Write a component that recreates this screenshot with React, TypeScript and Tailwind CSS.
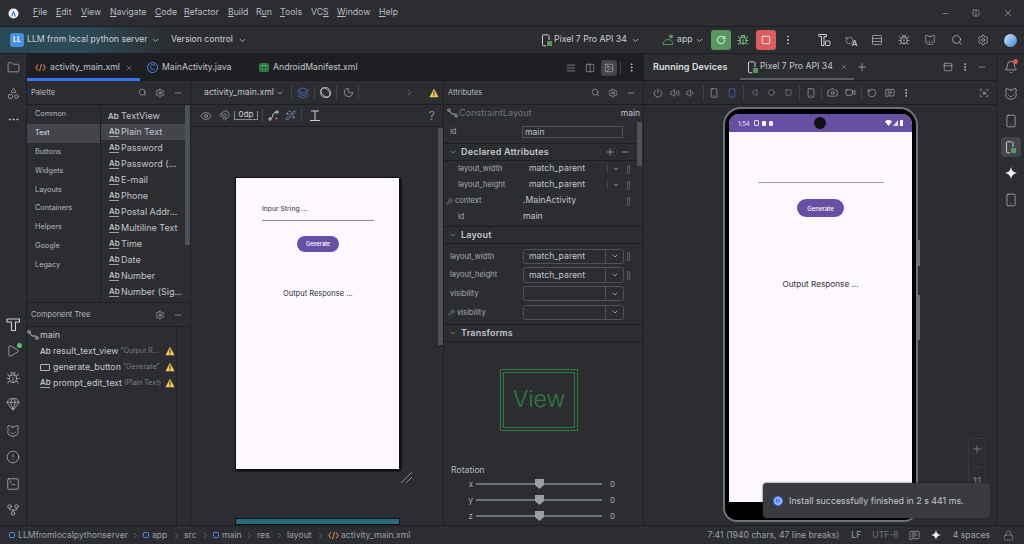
import React from 'react';
import {
  Bell, Bug, Camera, ChevronDown, ChevronRight, Circle, CircleAlert, EllipsisVertical, Eye, Folder, Gem, GitFork,
  Layers, Lock, Magnet, MessageSquareText, Minus, Moon, MoreHorizontal, PanelTop, Play, Plus, Power, RotateCcw, Search, Settings,
  Shapes, Square, SquareTerminal, Triangle, Video, Volume1, Volume2, Wand2, Wrench, X,
  AlignJustify, Columns2, Image, Smartphone, Rows3, Cat, ScanSearch, Info,
} from 'lucide-react';

const ic = '#ced0d6';

const Ab: React.FC<{ line?: boolean }> = ({ line = true }) => (
  <span className={`inline-block w-[10px] text-[8px] leading-[9px] font-medium text-[#ced0d6] ${line ? 'border-b border-[#9da0a8]' : ''}`}>Ab</span>
);

const Warn: React.FC = () => (
  <svg width="10" height="10" viewBox="0 0 10 10" className="shrink-0">
    <path d="M5 .8 9.600 9.200H.4z" fill="#f2c55c" />
    <rect x="4.500" y="3.400" width="1" height="3.200" fill="#2b2d30" />
    <rect x="4.500" y="7.200" width="1" height="1" fill="#2b2d30" />
  </svg>
);

const Sparkle: React.FC<{ size?: number }> = ({ size = 12 }) => (
  <svg width={size} height={size} viewBox="0 0 12 12"><path d="M6 0C6.500 3.500 8.500 5.500 12 6 8.500 6.500 6.500 8.500 6 12 5.500 8.500 3.500 6.500 0 6 3.500 5.500 5.500 3.500 6 0z" fill="#eef0f4" /></svg>
);

const DeviceIcon: React.FC = () => (
  <svg width="12" height="13" viewBox="0 0 12 13" fill="none" className="shrink-0">
    <path d="M7 .8H2.500a1 1 0 0 0-1 1v9a1 1 0 0 0 1 1H5" stroke="#ced0d6" strokeWidth="1" />
    <rect x="6" y="7" width="5" height="5" fill="#57965c" />
    <rect x="7.500" y="1" width="1" height="5" fill="#ced0d6" />
  </svg>
);

const Hammer: React.FC = () => (
  <svg width="15" height="15" viewBox="0 0 15 15" fill="none" stroke={ic} strokeWidth="1.100">
    <path d="M1.500 2h12v3h-4v8.500h-4V5h-4c-1 0-1-3 0-3z" />
  </svg>
);

const BuildIcon: React.FC = () => (
  <svg width="14" height="14" viewBox="0 0 14 14" fill="none" stroke={ic} strokeWidth="1" className="shrink-0">
    <path d="M1.500 1.500h8v2h-2.500v9h-2.500v-9H2.500c-1.200 0-1.200-2 0-2z" />
    <rect x="8.500" y="8" width="4.500" height="4.500" rx=".8" />
  </svg>
);

const XmlIcon: React.FC = () => (
  <svg width="11" height="9" viewBox="0 0 11 9" fill="none" stroke="#c77d55" strokeWidth="1.100" className="shrink-0">
    <path d="M3 1.500 .8 4.500 3 7.500M8 1.500l2.200 3L8 7.500M6.500.8 4.500 8.200" />
  </svg>
);

const Mod: React.FC = () => <span className="w-[6px] h-[6px] rounded-[1.500px] border border-[#548af7] shrink-0" />;

const Sep: React.FC<{ className: string }> = ({ className }) => (
  <ChevronRight size={9} strokeWidth={1.500} className={`text-[#868a91] shrink-0 ${className}`} />
);

const menu: [string, string, string, string][] = [
  ['', 'F', 'ile', 'w-[23px]'],
  ['', 'E', 'dit', 'w-[25px]'],
  ['', 'V', 'iew', 'w-[29px]'],
  ['', 'N', 'avigate', 'w-[45px]'],
  ['', 'C', 'ode', 'w-[29px]'],
  ['', 'R', 'efactor', 'w-[44px]'],
  ['', 'B', 'uild', 'w-[28px]'],
  ['R', 'u', 'n', 'w-[24px]'],
  ['', 'T', 'ools', 'w-[31px]'],
  ['VC', 'S', '', 'w-[26px]'],
  ['', 'W', 'indow', 'w-[42px]'],
  ['', 'H', 'elp', 'w-[30px]'],
];

const TitleBar: React.FC = () => (
  <div className="h-[27px] flex items-center bg-[#2b2d30] border-b border-[#1e1f22] shrink-0">
    <div className="w-[33px] pl-[8px] flex">
      <svg width="11" height="11" viewBox="0 0 11 11"><circle cx="5.500" cy="5.500" r="5" fill="#f2f4f8" /><path d="M5.500 2.200 3 8.500h1.300l1.200-3.400 1.200 3.400H8z" fill="#3574f0" /></svg>
    </div>
    {menu.map(([a, u, b, w]) => (
      <span key={u + b} className={`${w} text-[8.700px] text-[#bcbec4] whitespace-nowrap`}>
        {a}<span className="underline underline-offset-1">{u}</span>{b}
      </span>
    ))}
    <div className="ml-auto flex items-center text-[#ced0d6]">
      <Minus size={9} strokeWidth={1.200} className="mr-[22px]" />
      <Columns2 size={8} strokeWidth={1.300} className="mr-[23px]" />
      <X size={10} strokeWidth={1.200} className="mr-[11px]" />
    </div>
  </div>
);

const Toolbar: React.FC = () => (
  <div className="h-[27px] flex items-center bg-[#2b2d30] border-b border-[#1e1f22] shrink-0 text-[#ced0d6] text-[8.700px] text-[#c3c6cc]">
    <div className="w-[171px] h-full flex items-center pl-[10px] bg-gradient-to-r from-[#2a4a57] via-[#2a4a57] to-[#2b2d30] shrink-0">
      <span className="w-[14px] h-[14px] rounded-[3px] bg-[#4a8fe0] text-[7px] font-bold text-white flex items-center justify-center shrink-0">LL</span>
      <span className="ml-[3px] whitespace-nowrap">LLM from local python server</span>
      <ChevronDown size={9} className="ml-[3px] shrink-0" />
    </div>
    <span className="w-[64px] whitespace-nowrap">Version control</span>
    <ChevronDown size={9} className="ml-[3px]" />
    <div className="ml-[294px]"><DeviceIcon /></div>
    <span className="ml-[1px] w-[73px] whitespace-nowrap">Pixel 7 Pro API 34</span>
    <ChevronDown size={9} className="ml-[4px]" />
    <svg width="12" height="12" viewBox="0 0 12 12" fill="none" className="ml-[22px]"><path d="M1 10.500c0-3 2-5 5-5s5 2 5 5z" stroke="#57965c" /><circle cx="9" cy="2.500" r="2" fill="#57965c" /></svg>
    <span className="ml-[3px] w-[15px]">app</span>
    <ChevronDown size={9} className="ml-[3px]" />
    <span className="ml-[7px] w-[20px] h-[20px] rounded-[3px] bg-[#57965c] flex items-center justify-center"><RotateCcw size={10} className="scale-x-[-1] text-white" /></span>
    <Bug size={12} className="ml-[6px] text-[#7ac27f]" />
    <span className="ml-[7px] w-[20px] h-[20px] rounded-[3px] bg-[#db5c5c] flex items-center justify-center"><Square size={10} className="text-white" /></span>
    <EllipsisVertical size={12} className="ml-[6px]" />
    <div className="ml-[23px] flex items-center gap-[14.500px]">
      <BuildIcon />
      <span className="flex items-end w-[12px] -ml-[1px] relative">
        <RotateCcw size={9} strokeWidth={1.300} />
        <span className="absolute right-[-1px] bottom-[-2px] text-[8px] leading-none font-medium">A</span>
      </span>
      <Rows3 size={12} strokeWidth={1.200} />
      <Bug size={12} strokeWidth={1.200} />
      <Cat size={12} strokeWidth={1.200} />
      <Search size={12} strokeWidth={1.300} />
      <Settings size={12} strokeWidth={1.200} />
      <span className="w-[13px] h-[13px] rounded-full bg-gradient-to-br from-[#d6e4f0] to-[#2f86d6]" />
    </div>
  </div>
);

const LeftStripe: React.FC = () => (
  <div className="w-[27px] shrink-0 flex flex-col items-center border-r border-[#1e1f22] text-[#ced0d6] pt-[7px] h-full">
    <Folder size={13} strokeWidth={1.100} />
    <Shapes size={13} strokeWidth={1.100} className="mt-[13px]" />
    <MoreHorizontal size={13} strokeWidth={1.500} className="mt-[13px]" />
    <div className="mt-auto flex flex-col items-center gap-[12.500px] pb-[8px]">
      <Hammer />
      <span className="relative flex">
        <Play size={14} strokeWidth={1.100} />
        <span className="absolute -top-px -right-[2px] w-[5px] h-[5px] rounded-full bg-[#57c26a]" />
      </span>
      <Bug size={14} strokeWidth={1.100} />
      <Gem size={14} strokeWidth={1.100} />
      <Cat size={14} strokeWidth={1.100} />
      <CircleAlert size={14} strokeWidth={1.100} />
      <SquareTerminal size={14} strokeWidth={1.100} />
      <GitFork size={14} strokeWidth={1.100} />
    </div>
  </div>
);

const RightStripe: React.FC = () => (
  <div className="w-[28px] shrink-0 flex flex-col items-center border-l border-[#1e1f22] text-[#ced0d6] pt-[6px] h-full">
    <span className="relative flex">
      <Bell size={14} strokeWidth={1.100} />
      <span className="absolute -top-[1px] right-0 w-[5px] h-[5px] rounded-full bg-[#e0564f]" />
    </span>
    <Cat size={14} strokeWidth={1.100} className="mt-[13px]" />
    <Smartphone size={14} strokeWidth={1.100} className="mt-[13px]" />
    <span className="mt-[9px] w-[20px] h-[20px] rounded-[4px] bg-[#43454a] flex items-center justify-center"><DeviceIcon /></span>
    <div className="mt-[10px] flex"><Sparkle /></div>
    <Smartphone size={14} strokeWidth={1.100} className="mt-[14px]" />
  </div>
);

const TabBar: React.FC = () => (
  <div className="h-[27px] flex items-stretch bg-[#1e1f22] shrink-0 text-[#c3c6cc] text-[8.700px]">
    <div className="w-[113px] flex items-center pl-[8px] border-b-[3px] border-[#3574f0] pt-[3px]">
      <XmlIcon />
      <span className="ml-[4px] w-[69px] whitespace-nowrap">activity_main.xml</span>
      <X size={8} className="ml-[6px] text-[#868a91]" />
    </div>
    <div className="w-[118px] flex items-center pl-[7px]">
      <span className="w-[11px] h-[11px] rounded-full border border-[#548af7] text-[7px] leading-[9px] text-center text-[#548af7]">C</span>
      <span className="ml-[4px]">MainActivity.java</span>
    </div>
    <div className="flex items-center pl-[1px]">
      <span className="w-[10px] h-[9px] rounded-[1.500px] bg-[#2f7a43] flex justify-center gap-[2px] pt-[2px]">
        <span className="w-[1px] h-[1px] bg-[#cfe8d5]" />
        <span className="w-[1px] h-[1px] bg-[#cfe8d5]" />
      </span>
      <span className="ml-[4px]">AndroidManifest.xml</span>
    </div>
    <div className="ml-auto flex items-center text-[#ced0d6]">
      <AlignJustify size={10} strokeWidth={1.200} className="mr-[9px]" />
      <Columns2 size={10} strokeWidth={1.200} className="mr-[6px]" />
      <span className="w-[16px] h-[16px] rounded-[3px] bg-[#43454a] flex items-center justify-center mr-[3px]"><Image size={10} strokeWidth={1.200} /></span>
      <span className="w-px h-[14px] bg-[#43454a] mr-[5px]" />
      <EllipsisVertical size={11} className="mr-[7px]" />
    </div>
  </div>
);

const cats = ['Common', 'Text', 'Buttons', 'Widgets', 'Layouts', 'Containers', 'Helpers', 'Google', 'Legacy'];
const items = ['Plain Text', 'Password', 'Password (...', 'E-mail', 'Phone', 'Postal Addr...', 'Multiline Text', 'Time', 'Date', 'Number', 'Number (Sig...'];

const PanelHead: React.FC<{ title: string; search?: boolean }> = ({ title, search = true }) => (
  <div className="h-[24px] flex items-center border-b border-[#1e1f22] pl-[4px] pr-[7px] text-[#ced0d6] shrink-0">
    <span className="text-[7.500px] text-[#b4b8bf]">{title}</span>
    <div className="ml-auto flex items-center gap-[8px]">
      {search && <Search size={9} strokeWidth={1.300} />}
      <Settings size={10} strokeWidth={1.200} />
      <Minus size={10} strokeWidth={1.200} />
    </div>
  </div>
);

const Palette: React.FC = () => (
  <div className="w-[164px] shrink-0 h-full flex flex-col border-r border-[#1e1f22]">
    <PanelHead title="Palette" />
    <div className="h-[198px] flex border-b border-[#1e1f22] shrink-0">
      <div className="w-[74px] border-r border-[#1e1f22] pt-[0.500px] text-[7.300px] text-[#b4b8bf]">
        {cats.map((c) => (
          <div key={c} className={`h-[18.800px] flex items-center pl-[8px] ${c === 'Text' ? 'bg-[#43454a] text-[#dfe1e5]' : ''}`}>{c}</div>
        ))}
      </div>
      <div className="flex-1 relative text-[9px] text-[#c3c6cc] pt-[3px]">
        <div className="h-[16px] flex items-center pl-[7px] gap-[2px]"><Ab line={false} /><span className="ml-[1px]">TextView</span></div>
        {items.map((i) => (
          <div key={i} className={`h-[16px] flex items-center pl-[8px] gap-[2px] whitespace-nowrap ${i === 'Plain Text' ? 'bg-[#43454a]' : ''}`}><Ab /><span>{i}</span></div>
        ))}
        <span className="absolute right-0 top-0 w-[5px] h-[140px] bg-[#4e5157]" />
      </div>
    </div>
    <PanelHead title="Component Tree" search={false} />
    <div className="flex-1 flex">
      <div className="w-[150px] border-r border-[#1e1f22] text-[8.800px] text-[#c3c6cc]">
        <div className="h-[16px] flex items-center gap-[1px]">
          <svg width="12" height="10" viewBox="0 0 12 10" fill="none" stroke="#b4b8bf"><circle cx="2" cy="2" r="1.300" /><circle cx="10" cy="8" r="1.300" /><path d="M3 3l2 3h4" /></svg>
          <span>main</span>
        </div>
        <div className="h-[16px] flex items-center pl-[13px] whitespace-nowrap"><Ab line={false} /><span className="ml-[3px]">result_text_view</span><span className="ml-[2px] text-[7px] text-[#7a7e85]">"Output R...</span><span className="ml-auto mr-[1px]"><Warn /></span></div>
        <div className="h-[16px] flex items-center pl-[13px] whitespace-nowrap"><span className="w-[10px] h-[7px] border border-[#b4b8bf] rounded-[1px]" /><span className="ml-[3px]">generate_button</span><span className="ml-[2px] text-[7px] text-[#7a7e85]">"Generate"</span><span className="ml-auto mr-[1px]"><Warn /></span></div>
        <div className="h-[16px] flex items-center pl-[13px] whitespace-nowrap"><Ab /><span className="ml-[3px]">prompt_edit_text</span><span className="ml-[2px] text-[7px] text-[#7a7e85]">(Plain Text)</span><span className="ml-auto mr-[1px]"><Warn /></span></div>
      </div>
    </div>
  </div>
);

const Designer: React.FC = () => (
  <div className="w-[253px] shrink-0 h-full flex flex-col border-r border-[#1e1f22] text-[#ced0d6] overflow-hidden">
    <div className="h-[24px] flex items-center border-b border-[#1e1f22] pl-[13px] shrink-0">
      <span className="text-[8.700px] w-[69px] whitespace-nowrap text-[#c3c6cc]">activity_main.xml</span>
      <ChevronDown size={8} className="ml-[3px]" />
      <span className="w-px h-[13px] bg-[#43454a] ml-[7px]" />
      <Layers size={12} strokeWidth={1.300} className="ml-[5px] text-[#548af7]" />
      <span className="w-px h-[13px] bg-[#43454a] ml-[5px]" />
      <svg width="13" height="13" viewBox="0 0 13 13" fill="none" stroke="#ced0d6" strokeWidth="0.800" className="ml-[4px]"><ellipse cx="6.500" cy="6.500" rx="5.500" ry="3.500" transform="rotate(45 6.500 6.500)" /><circle cx="6.500" cy="6.500" r="5" /></svg>
      <span className="w-px h-[13px] bg-[#43454a] ml-[4px]" />
      <Moon size={11} strokeWidth={1.200} className="ml-[6px]" />
      <span className="w-px h-[13px] bg-[#43454a] ml-[4px]" />
      <ChevronRight size={9} className="ml-[46px] text-[#868a91]" />
      <span className="ml-[15px]"><Warn /></span>
    </div>
    <div className="h-[22px] flex items-center border-b border-[#1e1f22] pl-[9px] shrink-0">
      <Eye size={12} strokeWidth={1.100} />
      <Magnet size={11} strokeWidth={1.200} className="ml-[7px]" />
      <span className="ml-[4px] w-[24px] h-[9px] border-b border-x border-[#868a91] text-[8px] leading-[7px] text-center">0dp</span>
      <span className="w-px h-[13px] bg-[#43454a] ml-[4px]" />
      <svg width="11" height="11" viewBox="0 0 11 11" fill="none" stroke="#ced0d6" className="ml-[5px]"><circle cx="2" cy="9" r="1.200" /><circle cx="9" cy="2" r="1.200" /><path d="M2.800 8C6 8 3 3 8 2.500" /><rect x="7.500" y="7.500" width="2" height="2" fill="#db5c5c" stroke="none" /></svg>
      <Wand2 size={11} strokeWidth={1.200} className="ml-[6px] text-[#a8c0ef]" />
      <span className="w-px h-[13px] bg-[#43454a] ml-[5px]" />
      <svg width="12" height="12" viewBox="0 0 12 12" fill="none" stroke="#ced0d6" className="ml-[7px]"><path d="M2 1h8M6 1v9M1 10.500h10" /></svg>
      <span className="ml-auto mr-[8px] text-[12px] leading-none text-[#868a91]">?</span>
    </div>
    <div className="flex-1 flex flex-col pl-[44px] pt-[50px] relative">
      <div className="w-[165px] h-[293px] shrink-0 bg-[#fdf7ff] border-[1.500px] border-[#111] shadow-[1px_1px_2px_#000] text-[#333] flex flex-col">
        <span className="ml-[26px] mt-[24px] text-[6.800px] leading-[14px]">Inpur String ...</span>
        <span className="ml-[26px] mt-[4px] w-[112px] border-b border-[#8a8a8a]" />
        <span className="ml-[61px] mt-[15px] w-[42px] h-[16px] rounded-full bg-[#6750a4] text-white text-[5.500px] font-medium flex items-center justify-center">Generate</span>
        <span className="mt-[36px] pl-[47px] text-[7.500px] leading-[12px] whitespace-nowrap">Output Response ...</span>
      </div>
      <svg width="14" height="14" viewBox="0 0 14 14" stroke="#868a91" className="ml-[165px]"><path d="M1 13 12 2M6 13l6-6" /></svg>
      <div className="mt-auto w-[165px] h-[7px] bg-[#2a6a80] border border-[#111]" />
      <span className="absolute right-0 top-[1px] h-[217px] w-[5px] bg-[#4e5157]" />
    </div>
  </div>
);

const AttrRow: React.FC<{ label: string; value: string; drop?: boolean; wrench?: boolean }> = ({ label, value, drop, wrench }) => (
  <div className="h-[16px] flex items-center text-[7.500px] relative">
    <span className={`${wrench ? 'pl-[2px]' : 'pl-[14px]'} w-[79px] text-[#a8abb2] flex items-center gap-[2px]`}>
      {wrench && <Wrench size={7} strokeWidth={1.500} />}{label}
    </span>
    <span className={`whitespace-nowrap text-[#c3c6cc] text-[8.700px] ${drop ? 'pl-[6px]' : ''}`}>{value}</span>
    {drop && <span className="absolute left-[163px] flex items-center"><span className="w-px h-[8px] bg-[#43454a] mr-[4px]" /><ChevronDown size={8} className="text-[#ced0d6]" /></span>}
    {(drop || value === '.MainActivity') && <span className="absolute left-[183px] w-[3px] h-[9px] border border-[#5a5d63] rounded-[1px]" />}
  </div>
);

const Combo: React.FC<{ label: string; value?: string; wrench?: boolean; pin?: boolean }> = ({ label, value, wrench, pin }) => (
  <div className="h-[18.700px] flex items-center text-[7.500px] text-[#a8abb2] relative">
    <span className={`w-[79px] flex items-center gap-[2px] ${wrench ? 'pl-[4px]' : 'pl-[6px]'}`}>
      {wrench && <Wrench size={7} strokeWidth={1.500} />}{label}
    </span>
    <div className="w-[101px] h-[15.500px] rounded-[2.500px] border border-[#4e5157] flex items-center">
      <span className="flex-1 pl-[5px] text-[8.700px] whitespace-nowrap text-[#c3c6cc]">{value}</span>
      <span className="w-[18px] h-full border-l border-[#4e5157] flex items-center justify-center"><ChevronDown size={8} className="text-[#ced0d6]" /></span>
    </div>
    {pin && <span className="absolute left-[183px] w-[3px] h-[9px] border border-[#5a5d63] rounded-[1px]" />}
  </div>
);

const Section: React.FC<{ title: string; children?: React.ReactNode }> = ({ title, children }) => (
  <div className="h-[18px] flex items-center border-y border-[#1e1f22] pl-[5px] text-[9px] font-semibold text-[#c3c6cc] tracking-[0.200px]">
    <ChevronDown size={8} className="mr-[4px] text-[#9da0a8]" />{title}{children}
  </div>
);

const Slider: React.FC<{ axis: string }> = ({ axis }) => (
  <div className="h-[16px] flex items-center text-[8px] text-[#a8abb2]">
    <span className="w-[32px] text-right pr-[3px]">{axis}</span>
    <div className="w-[126px] h-[2px] bg-[#6f737a] relative">
      <svg width="9" height="10" viewBox="0 0 9 10" className="absolute left-[59px] -top-[4px]"><path d="M0 0h9v6L4.500 10 0 6z" fill="#9da0a8" /></svg>
    </div>
    <span className="ml-[8px]">0</span>
  </div>
);

const Attributes: React.FC = () => (
  <div className="w-[200px] shrink-0 h-full flex flex-col border-r border-[#1e1f22] relative overflow-hidden">
    <PanelHead title="Attributes" />
    <div className="h-[16px] flex items-center pl-[3px] pr-[3px] text-[8.500px]">
      <svg width="11" height="10" viewBox="0 0 12 10" fill="none" stroke="#b4b8bf"><circle cx="2" cy="2" r="1.300" /><circle cx="10" cy="8" r="1.300" /><path d="M3 3l2 3h4" /></svg>
      <span className="ml-[1px] text-[#6f737a] text-[9px]">ConstraintLayout</span>
      <span className="ml-auto text-[#c3c6cc]">main</span>
    </div>
    <div className="h-[22px] flex items-center text-[7.500px] text-[#a8abb2]">
      <span className="w-[78px] pl-[6px]">id</span>
      <span className="w-[101px] h-[12px] border border-[#4e5157] bg-[#2b2d30] pl-[2px] text-[8.600px] leading-[10px] text-[#c3c6cc]">main</span>
    </div>
    <Section title="Declared Attributes">
      <Plus size={10} strokeWidth={1.300} className="ml-auto text-[#ced0d6]" />
      <Minus size={10} strokeWidth={1.300} className="ml-[5px] mr-[13px] text-[#ced0d6]" />
    </Section>
    <AttrRow label="layout_width" value="match_parent" drop />
    <AttrRow label="layout_height" value="match_parent" drop />
    <AttrRow label="context" value=".MainActivity" wrench />
    <AttrRow label="id" value="main" />
    <div className="h-[1px]" />
    <Section title="Layout" />
    <div className="h-[3px]" />
    <Combo label="layout_width" value="match_parent" pin />
    <Combo label="layout_height" value="match_parent" pin />
    <Combo label="visibility" />
    <Combo label="visibility" wrench />
    <div className="h-[2px]" />
    <Section title="Transforms" />
    <div className="mt-[27px] ml-[56px] w-[78px] h-[62px] shrink-0 border-[1.500px] border-[#2f7a43] p-[2px]">
      <div className="w-full h-full border border-[#2f7a43] flex items-center justify-center text-[23px] font-light text-[#2f7a43] leading-none">View</div>
    </div>
    <div className="mt-[32px] pl-[7px] text-[8.700px] text-[#b4b8bf] leading-[14px]">Rotation</div>
    <div className="-mt-[1px]">
      <Slider axis="x" />
      <Slider axis="y" />
      <Slider axis="z" />
    </div>
    <span className="absolute right-[1px] top-[41px] w-[5px] h-[44px] bg-[#4e5157]" />
  </div>
);

const Phone: React.FC = () => (
  <div className="w-[195px] h-[415px] rounded-t-[18px] rounded-b-[14px] border-[2px] border-[#6f737a] bg-black shrink-0 pt-[5px] px-[4px] overflow-hidden">
    <div className="h-[388px] rounded-t-[10px] overflow-hidden bg-[#fdf7ff] flex flex-col items-center text-[#333]">
      <div className="w-full h-[18px] bg-[#6750a4] flex items-center px-[9px] text-white shrink-0 relative">
        <span className="text-[6px] text-[#e9e0f5]">1:54</span>
        <span className="ml-[4px] w-[5px] h-[6px] border border-white/80 rounded-[1px]" />
        <span className="ml-[3px] w-[4px] h-[5px] bg-white rounded-[1px]" />
        <span className="ml-[3px] w-[4px] h-[5px] bg-white/90 rounded-[1px]" />
        <span className="absolute left-[85px] top-[3px] w-[12px] h-[12px] rounded-full bg-[#111]" />
        <span className="ml-auto flex items-center gap-[1px]">
          <svg width="7" height="6" viewBox="0 0 7 6"><path d="M0 1.500C2-.5 5-.5 7 1.500L3.500 6z" fill="#fff" /></svg>
          <svg width="5" height="6" viewBox="0 0 5 6"><path d="M5 0v6H0z" fill="#fff" opacity=".8" /></svg>
          <span className="ml-[1px] w-[3px] h-[6px] bg-white rounded-[.5px]" />
        </span>
      </div>
      <span className="mt-[50px] w-[126px] border-b border-[#9e9e9e]" />
      <span className="mt-[16px] w-[47px] h-[18px] rounded-full bg-[#6750a4] text-white text-[6px] font-medium flex items-center justify-center">Generate</span>
      <span className="mt-[61px] text-[8.200px] leading-[12px] whitespace-nowrap">Output Response ...</span>
    </div>
  </div>
);

const Running: React.FC = () => (
  <div className="flex-1 h-full flex flex-col relative text-[#ced0d6] overflow-hidden">
    <div className="h-[27px] flex items-stretch border-b border-[#1e1f22] shrink-0">
      <span className="pl-[9px] flex items-center text-[9px] font-semibold text-[#dfe1e5] tracking-[0.100px] w-[96px]">Running Devices</span>
      <div className="w-[114px] flex items-center pl-[7px] border-b-[2px] border-[#5a5d63] pt-[2px]">
        <DeviceIcon />
        <span className="ml-[1px] w-[73px] text-[8.700px] whitespace-nowrap text-[#c3c6cc]">Pixel 7 Pro API 34</span>
        <X size={8} className="ml-[7px] text-[#868a91] shrink-0" />
      </div>
      <span className="flex items-center ml-[2px]"><Plus size={12} strokeWidth={1.200} /></span>
      <span className="ml-auto flex items-center gap-[7px] pr-[9px]">
        <PanelTop size={10} strokeWidth={1.300} />
        <EllipsisVertical size={10} />
        <Minus size={10} strokeWidth={1.200} />
      </span>
    </div>
    <div className="h-[24px] flex items-center border-b border-[#1e1f22] pl-[9px] shrink-0">
      <Power size={10} strokeWidth={1.200} />
      <Volume2 size={10} strokeWidth={1.200} className="ml-[7px]" />
      <Volume1 size={10} strokeWidth={1.200} className="ml-[6px]" />
      <span className="w-px h-[13px] bg-[#43454a] ml-[7px]" />
      <Smartphone size={10} strokeWidth={1.200} className="ml-[5px]" />
      <Smartphone size={10} strokeWidth={1.200} className="ml-[8px] text-[#548af7]" />
      <span className="w-px h-[13px] bg-[#43454a] ml-[6px]" />
      <Triangle size={7} strokeWidth={1.300} className="ml-[6.500px] -rotate-90" />
      <Circle size={7} strokeWidth={1.300} className="ml-[10px]" />
      <Square size={7} strokeWidth={1.300} className="ml-[10px]" />
      <span className="w-px h-[13px] bg-[#43454a] ml-[7.500px]" />
      <Smartphone size={10} strokeWidth={1.200} className="ml-[6px]" />
      <span className="w-px h-[13px] bg-[#43454a] ml-[5px]" />
      <Camera size={11} strokeWidth={1.200} className="ml-[5px]" />
      <Video size={11} strokeWidth={1.200} className="ml-[6.500px]" />
      <span className="w-px h-[13px] bg-[#43454a] ml-[5.500px]" />
      <RotateCcw size={10} strokeWidth={1.200} className="ml-[5px]" />
      <MessageSquareText size={10} strokeWidth={1.200} className="ml-[7.500px]" />
      <EllipsisVertical size={10} className="ml-[6.500px]" />
      <ScanSearch size={10} strokeWidth={1.200} className="ml-auto mr-[7px]" />
    </div>
    <div className="flex-1 pl-[79px] pt-[2px]">
      <Phone />
    </div>
    <span className="absolute left-[274px] top-[186px] w-[2px] h-[26px] bg-[#6f737a]" />
    <span className="absolute left-[274px] top-[241px] w-[2px] h-[45px] bg-[#6f737a]" />
    <div className="absolute left-[324px] top-[384px] w-[18px] h-[60px] border border-[#393b40] rounded-[3px] flex flex-col items-center pt-[4px] text-[#9da0a8]">
      <Plus size={12} strokeWidth={1.200} />
      <Minus size={12} strokeWidth={1.200} className="mt-[6px] text-[#4e5157]" />
      <span className="text-[7px] mt-[3px]">1:1</span>
    </div>
    <div className="absolute left-[119px] top-[429px] w-[227px] h-[35px] rounded-[4px] bg-[#393b40] flex items-center pl-[10px] text-[8.850px] text-[#c3c6cc] shadow-[0_0_2px_#1e1f22]">
      <span className="w-[10px] h-[10px] rounded-full bg-[#3574f0] flex items-center justify-center mr-[6px]"><Info size={8} className="text-white" strokeWidth={2.500} /></span>
      Install successfully finished in 2 s 441 ms.
    </div>
  </div>
);

const StatusBar: React.FC = () => (
  <div className="h-[19px] flex items-center border-t border-[#1e1f22] bg-[#2b2d30] shrink-0 text-[8.650px] text-[#9da0a8] pl-[9px] pr-[10.500px] whitespace-nowrap">
    <Mod />
    <span className="ml-[3px] w-[110px]">LLMfromlocalpythonserver</span>
    <Sep className="ml-[2.500px]" />
    <span className="ml-[3.500px] flex"><Mod /></span>
    <span className="ml-[3px] w-[15px]">app</span>
    <Sep className="ml-[4.500px]" />
    <span className="ml-[3.500px] w-[13px]">src</span>
    <Sep className="ml-[3.500px]" />
    <span className="ml-[3.500px] flex"><Mod /></span>
    <span className="ml-[3px] w-[18px]">main</span>
    <Sep className="ml-[4.500px]" />
    <span className="ml-[3.500px] w-[13px]">res</span>
    <Sep className="ml-[4.500px]" />
    <span className="ml-[3.500px] w-[25px]">layout</span>
    <Sep className="ml-[3.500px]" />
    <span className="ml-[3px] flex"><XmlIcon /></span>
    <span className="ml-[2.500px]">activity_main.xml</span>
    <span className="ml-auto">7:41 (1940 chars, 47 line breaks)</span>
    <span className="ml-[12px]">LF</span>
    <span className="ml-[11px] text-[#6f737a]">UTF-8</span>
    <MessageSquareText size={11} strokeWidth={1.200} className="ml-[10.500px] text-[#ced0d6]" />
    <span className="ml-[10.500px] flex"><Sparkle size={10} /></span>
    <span className="ml-[12px]">4 spaces</span>
    <Lock size={11} strokeWidth={1.200} className="ml-[12.500px] text-[#9da0a8]" />
  </div>
);

const App: React.FC = () => (
  <div className="w-[1024px] h-[544px] flex flex-col overflow-hidden bg-[#2b2d30]" style={{ fontFamily: 'Inter, "Liberation Sans", sans-serif' }}>
    <TitleBar />
    <Toolbar />
    <div className="flex-1 min-h-0 flex">
      <LeftStripe />
      <div className="w-[617px] shrink-0 h-full flex flex-col">
        <TabBar />
        <div className="flex-1 min-h-0 flex">
          <Palette />
          <Designer />
          <Attributes />
        </div>
      </div>
      <Running />
      <RightStripe />
    </div>
    <StatusBar />
  </div>
);

export default App;
